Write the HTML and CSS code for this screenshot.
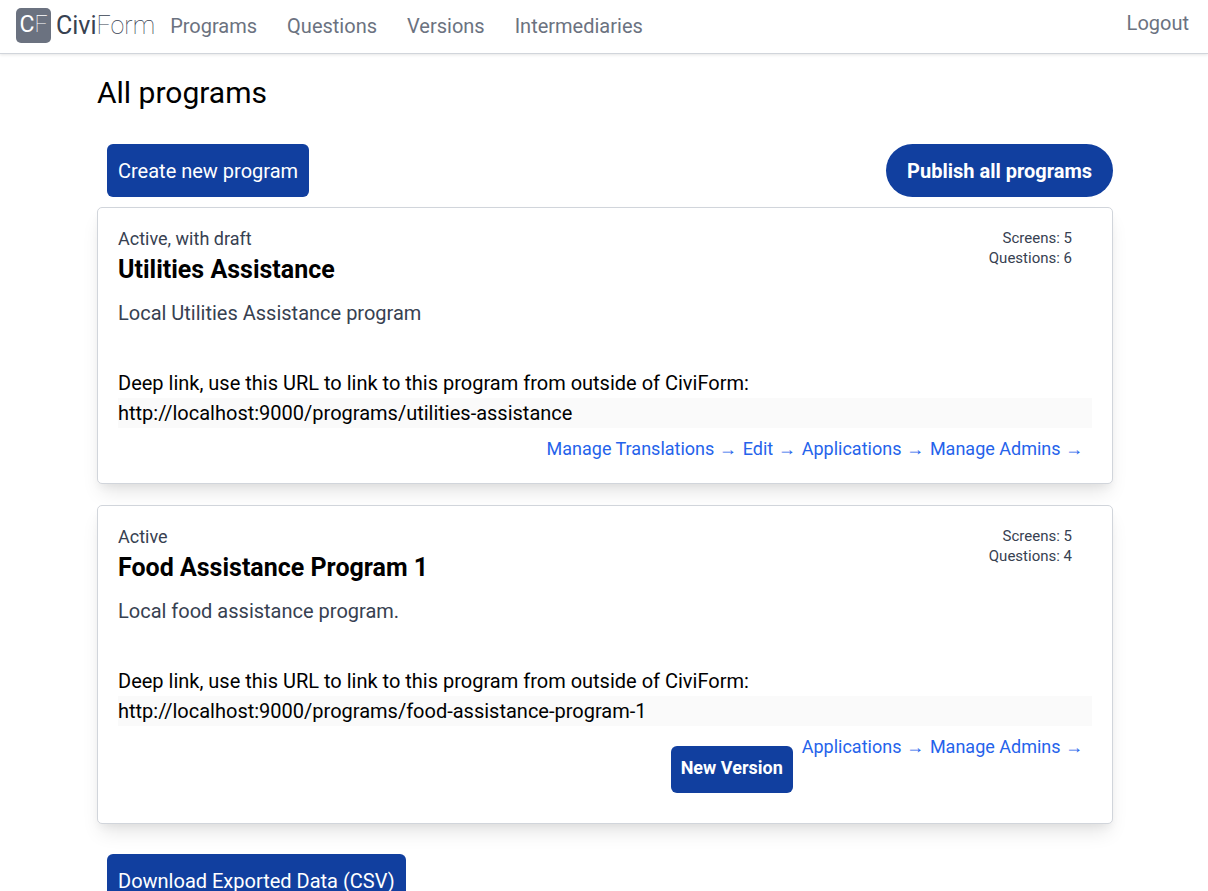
FILE: index.html
```html
<!DOCTYPE html>
<html lang="en">
<head>
<meta charset="utf-8">
<meta name="viewport" content="width=device-width, initial-scale=1">
<title>All programs</title>
<link rel="stylesheet" href="styles.css">
</head>
<body>
<nav class="nav">
  <a class="brand" href="#"><span class="mark">C<span class="thin">F</span></span><span class="wordmark">Civi<span class="thin">Form</span></span></a>
  <a class="nav-link" href="#">Programs</a>
  <a class="nav-link" href="#">Questions</a>
  <a class="nav-link" href="#">Versions</a>
  <a class="nav-link" href="#">Intermediaries</a>
  <a class="logout" href="#">Logout</a>
</nav>
<main class="main">
  <h1 class="heading">All programs</h1>
  <div class="toolbar">
    <button class="button" type="button">Create new program</button>
    <button class="button publish" type="button">Publish all programs</button>
  </div>
  <section class="card">
    <div class="card-top">
      <div>
        <p class="status">Active, with draft</p>
        <h2 class="title">Utilities Assistance</h2>
        <p class="description">Local Utilities Assistance program</p>
      </div>
      <div class="counts"><p>Screens: 5</p><p>Questions: 6</p></div>
    </div>
    <p class="deep">Deep link, use this URL to link to this program from outside of CiviForm:</p>
    <p class="deep url">http://localhost:9000/programs/utilities-assistance</p>
    <div class="actions">
      <a class="action" href="#">Manage Translations →</a>
      <a class="action" href="#">Edit →</a>
      <a class="action" href="#">Applications →</a>
      <a class="action" href="#">Manage Admins →</a>
    </div>
  </section>
  <section class="card">
    <div class="card-top">
      <div>
        <p class="status">Active</p>
        <h2 class="title">Food Assistance Program 1</h2>
        <p class="description">Local food assistance program.</p>
      </div>
      <div class="counts"><p>Screens: 5</p><p>Questions: 4</p></div>
    </div>
    <p class="deep">Deep link, use this URL to link to this program from outside of CiviForm:</p>
    <p class="deep url">http://localhost:9000/programs/food-assistance-program-1</p>
    <div class="actions">
      <button class="new-version" type="button">New Version</button>
      <a class="action" href="#">Applications →</a>
      <a class="action" href="#">Manage Admins →</a>
    </div>
  </section>
  <button class="button download" type="button">Download Exported Data (CSV)</button>
</main>
</body>
</html>
```
FILE: styles.css
```css
* { box-sizing: border-box; }
html { overflow-x: hidden; scrollbar-width: none; }
body { margin: 0; font: 20px/30px Roboto, sans-serif; color: #000; background: #fff; }
h1, h2, p { margin: 0; }
a { text-decoration: none; }
button { font: inherit; border: 0; cursor: pointer; }

.nav {
  display: flex;
  align-items: center;
  padding: 8px 19px 10px 16px;
  border-bottom: 1px solid #d1d5db;
  box-shadow: 0 1px 3px rgba(0, 0, 0, .1);
  gap: 30px;
  color: #6b7280;
}
.brand { display: flex; align-items: center; gap: 5px; margin-right: -15px; }
.mark {
  width: 35px;
  height: 35px;
  border-radius: 5px;
  background: #6b7280;
  color: #fff;
  font-size: 23px;
  line-height: 34px;
  text-align: center;
}
.wordmark { font-size: 25px; line-height: 34px; color: #374151; }
.thin { font-weight: 100; }
.nav-link, .logout { color: #6b7280; }
.logout { margin-left: auto; padding-bottom: 5px; }

.main { padding: 16px 95px 20px 97px; }
.heading { font-size: 30px; line-height: 45px; font-weight: 400; }
.toolbar { display: flex; justify-content: space-between; padding: 29px 0 10px 10px; }
.button {
  padding: 12px 11px 11px;
  border-radius: 6px;
  background: #113f9f;
  color: #fff;
}
.publish { padding-inline: 21px; border-radius: 30px; font-weight: 700; }
.download { margin: 9px 0 0 10px; }

.card {
  padding: 20px;
  margin-bottom: 21px;
  border: 1px solid #d1d5db;
  border-radius: 5px;
  background: #fff;
  box-shadow: 0 12px 19px -4px rgba(0, 0, 0, .1), 0 5px 8px -2px rgba(0, 0, 0, .05);
}
.card-top { display: flex; justify-content: space-between; color: #374151; }
.status { font-size: 18px; line-height: 22px; }
.title { font-size: 25px; line-height: 40px; color: #000; }
.description { margin: 8px 0 40px; }
.counts { margin-right: 20px; font-size: 15px; line-height: 20px; text-align: right; }
.url { background: #fafafa; }
.actions { display: flex; justify-content: flex-end; align-items: flex-start; padding: 8px 9px 0 0; gap: 6px; }
.action { padding-bottom: 2px; font-size: 18px; line-height: 25px; color: #2563eb; }
.new-version {
  margin: 12px 3px 10px 0;
  padding: 9px 10px 13px;
  border-radius: 6px;
  background: #113f9f;
  color: #fff;
  font-size: 18px;
  line-height: 25px;
  font-weight: 700;
}
```
